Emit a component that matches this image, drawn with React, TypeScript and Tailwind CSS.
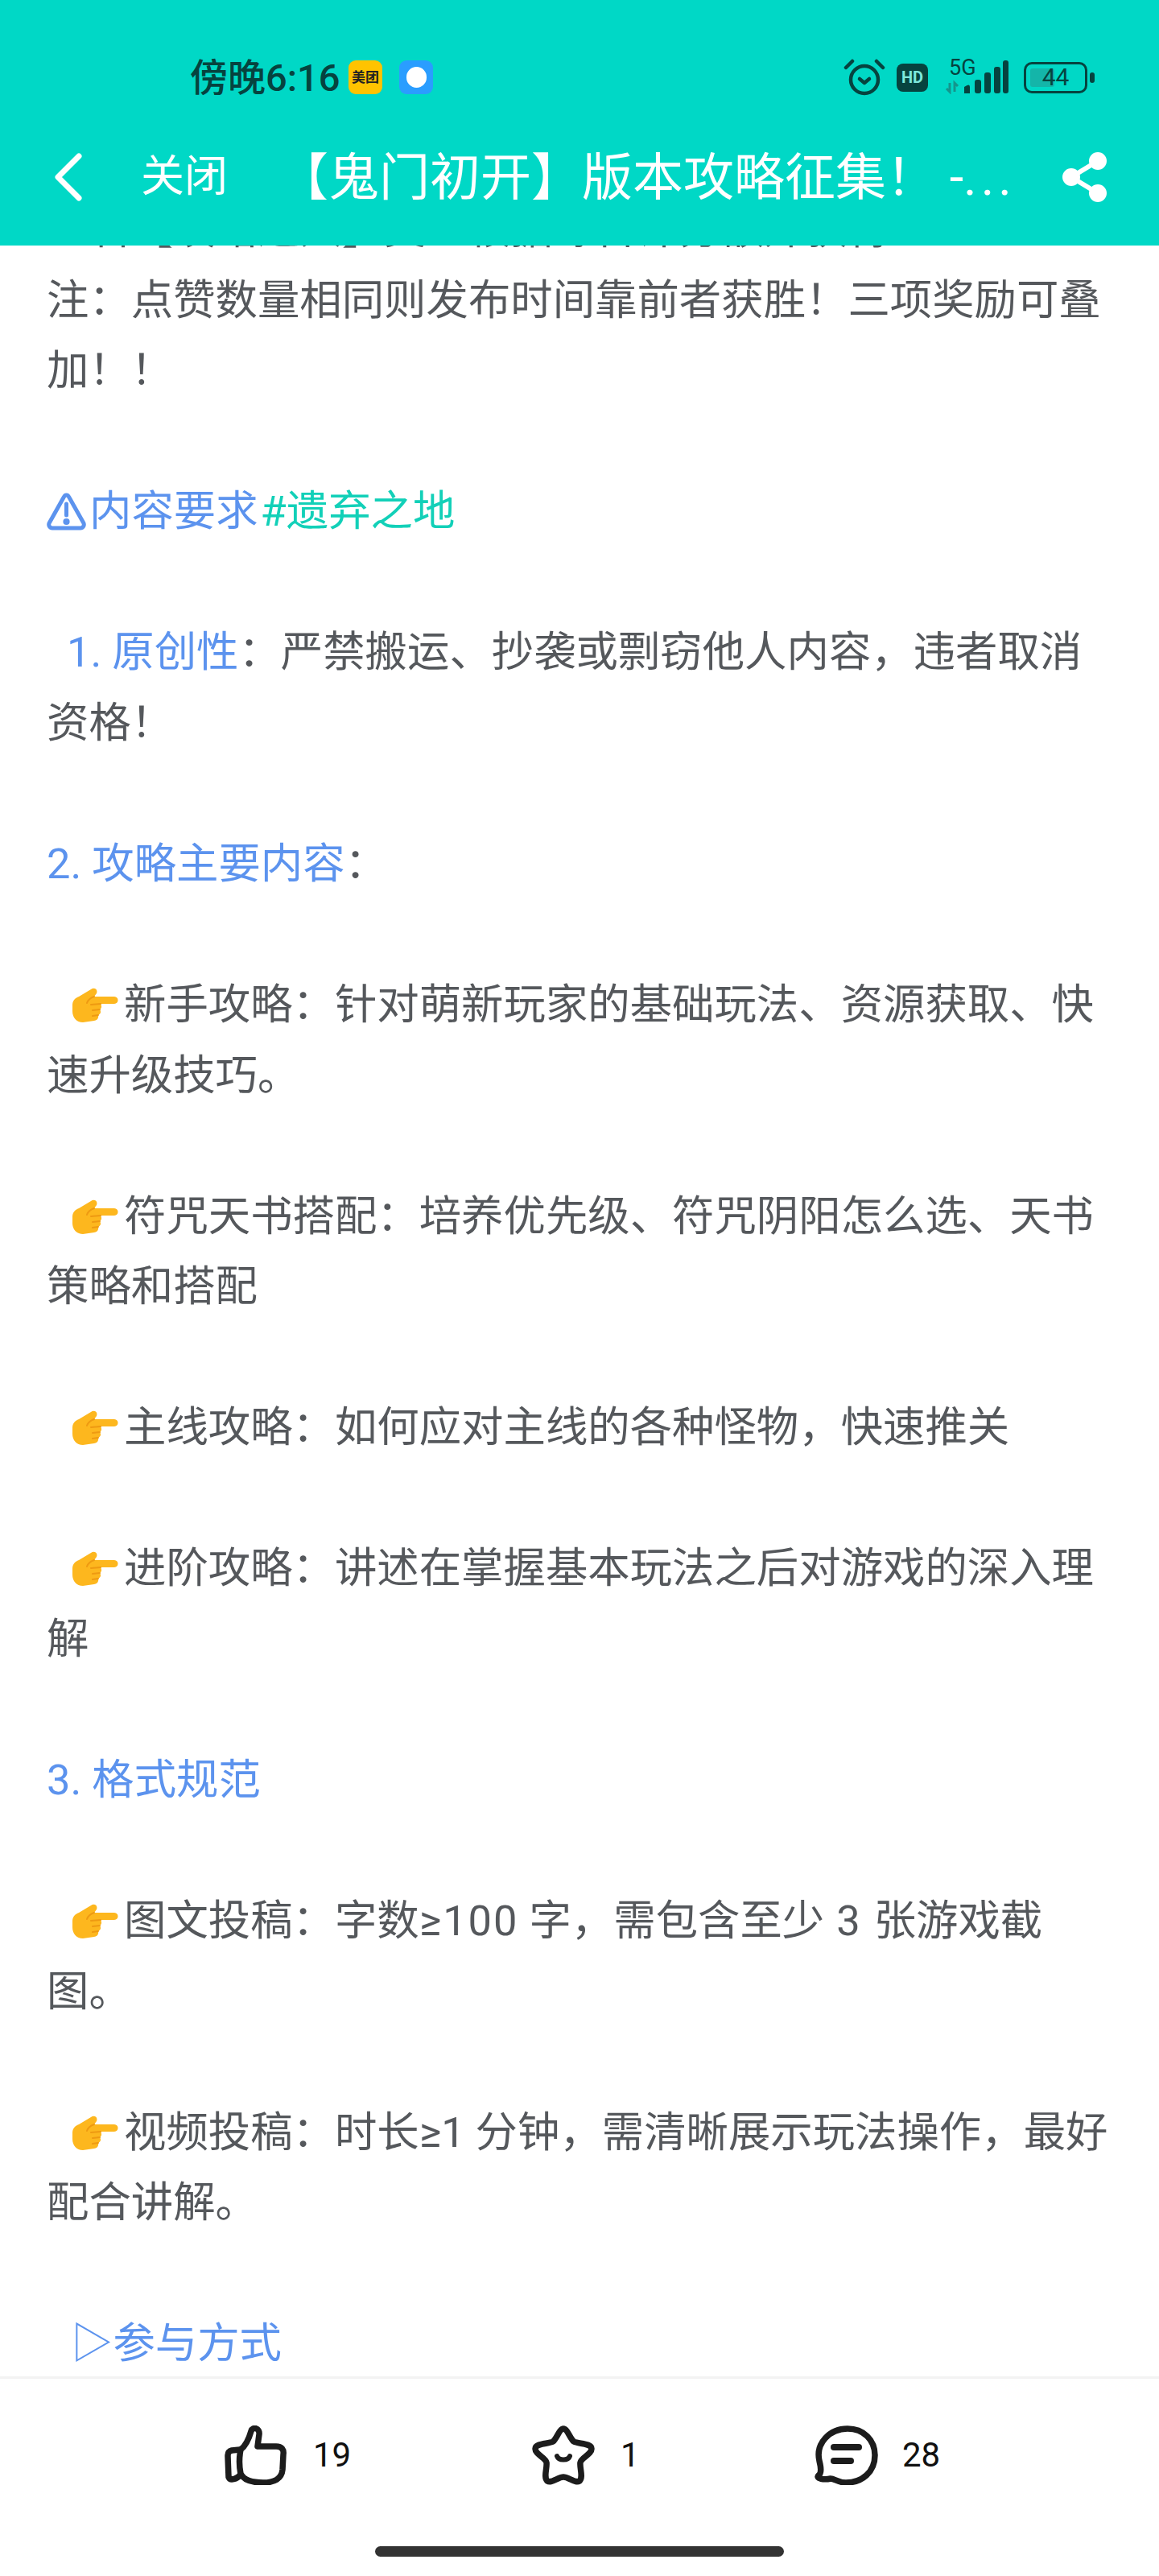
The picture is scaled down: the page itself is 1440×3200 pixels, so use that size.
const body = "text-[#55585c]";
const blue = "text-[#5c93ee]";
const dark = "#06433f";

function Hand() {
  return (
    <svg viewBox="0 0 58 45" className="mr-[7px] inline-block h-[45px] w-[58px] align-[-5px]">
      <path d="M1 23 C1 17 4 14 9 12 L24 3 C28 0 33 3 31 8 L28 12 L53 12 C59 12 59 21 53 21 L36 21 C38 24 37 27 35 28 C37 31 36 34 33 35 C34 39 31 42 28 42 L14 44 C6 44 1 38 1 30 Z" fill="#fdb71e" />
      <path d="M28 12 C22 14 20 17 19 20 M36 21 L24 22 M35 28 L26 29 M33 35 L26 36" fill="none" stroke="#ee9a12" strokeWidth="2" strokeLinecap="round" />
    </svg>
  );
}

function Warn() {
  return (
    <svg viewBox="0 0 49 47" className="mr-[4px] inline-block h-[47px] w-[49px] align-[-6px]" fill="none" stroke="#5c93ee" strokeWidth="5" strokeLinejoin="round" strokeLinecap="round">
      <path d="M24.5 3 C26 3 27 4 28 6 L46 38 C47 41 45 44 42 44 L7 44 C4 44 2 41 3 38 L21 6 C22 4 23 3 24.5 3 Z" />
      <path d="M24.5 14 L24.5 28" />
      <circle cx="24.5" cy="36" r="1.6" fill="#5c93ee" />
    </svg>
  );
}

function Line({ children, className = "" }: { children?: React.ReactNode; className?: string }) {
  return <p className={`min-h-[87.55px] ${className}`}>{children}</p>;
}

function Alarm() {
  return (
    <svg viewBox="0 0 52 46" className="h-[46px] w-[52px]" fill="none" stroke={dark} strokeWidth="4.5" strokeLinecap="round" strokeLinejoin="round">
      <circle cx="26" cy="26" r="17" />
      <path d="M20 25 L26 30 L32 25" />
      <path d="M3 11 L11 3 M49 11 L41 3" />
    </svg>
  );
}

function Signal() {
  return (
    <div className="relative h-[42px] w-[79px]">
      <span className="absolute left-[5px] top-[-6px] text-[27px] leading-[30px] text-[#06433f]">5G</span>
      <svg viewBox="0 0 79 42" className="h-[42px] w-[79px]">
        <path d="M6 28 L6 39 L2 35 M12 39 L12 28 L16 32" fill="none" stroke="#14958c" strokeWidth="3" />
        <path d="M24 41 L24 33 Q31 28 31 33 L31 41 Z" fill={dark} />
        <rect x="37" y="24" width="8" height="17" rx="3" fill={dark} />
        <rect x="49" y="15" width="8" height="26" rx="3" fill={dark} />
        <rect x="61" y="8" width="8" height="33" rx="3" fill={dark} />
        <rect x="72" y="0" width="7" height="41" rx="3" fill={dark} />
      </svg>
    </div>
  );
}

function Battery() {
  return (
    <div className="flex items-center gap-[3px]">
      <div className="relative flex h-[39px] w-[79px] items-center justify-center overflow-hidden rounded-[10px] border-[3px] border-[#06433f]">
        <span className="absolute inset-y-[5px] left-[5px] w-[30px] rounded-[3px] bg-[#14b5a9]" />
        <span className="relative text-[30px] leading-none text-[#06433f]">44</span>
      </div>
      <span className="h-[13px] w-[6px] rounded-full bg-[#06433f]" />
    </div>
  );
}

export default function App() {
  return (
    <div className="relative flex h-[3200px] w-[1440px] flex-col overflow-hidden bg-white font-['Roboto','Noto_Sans_CJK_SC',sans-serif]">
      <header className="relative z-10 h-[305px] shrink-0 bg-[#00d8c6]">
        <div className="flex h-[160px] items-center justify-between pl-[236px] pr-[80px] pt-[32px]">
          <div className="flex items-center">
            <span className="w-[184px] whitespace-nowrap text-[47px] font-medium leading-none text-[#06433f]">傍晚6:16</span>
            <span className="ml-[13px] flex h-[42px] w-[42px] items-center justify-center rounded-[9px] bg-[#ffc300] text-[17px] font-bold leading-none text-[#222]">美团</span>
            <span className="ml-[21px] flex h-[42px] w-[42px] items-center justify-center rounded-[9px] bg-[#2a9dff]">
              <span className="h-[26px] w-[25px] rounded-full bg-white" />
            </span>
          </div>
          <div className="flex items-center">
            <Alarm />
            <span className="ml-[14px] flex h-[35px] w-[39px] items-center justify-center rounded-[8px] bg-[#06433f] text-[20px] font-bold leading-none text-[#7de8dc]">HD</span>
            <div className="ml-[21px]">
              <Signal />
            </div>
            <div className="ml-[19px]">
              <Battery />
            </div>
          </div>
        </div>
        <div className="flex h-[120px] items-center pl-[66px] pr-[62px] text-white">
          <svg viewBox="0 0 40 60" className="h-[60px] w-[40px] shrink-0" fill="none" stroke="white" strokeWidth="7" strokeLinecap="round" strokeLinejoin="round">
            <path d="M32 4 L6 30 L32 56" />
          </svg>
          <span className="ml-[69px] shrink-0 text-[54px] leading-none">关闭</span>
          <span className="ml-[62px] whitespace-pre text-[63px] leading-none">【鬼门初开】版本攻略征集！ -<span className="tracking-[5px]">...</span></span>
          <svg viewBox="0 0 60 64" className="ml-auto h-[64px] w-[60px] shrink-0" fill="white" stroke="white" strokeWidth="6">
            <path d="M46 12 L13 32 L46 52" fill="none" />
            <circle cx="46" cy="12" r="8" />
            <circle cx="13" cy="32" r="8" />
            <circle cx="46" cy="52" r="8" />
          </svg>
        </div>
      </header>

      <main className={`min-h-0 flex-1 overflow-hidden px-[58px] text-[52.4px] leading-[87.55px] ${body}`}>
        <div className="mt-[-63px]">
          <Line>一名【攻略达人】奖：根据综合评分额外获得</Line>
          <Line>注：点赞数量相同则发布时间靠前者获胜！三项奖励可叠加！！</Line>
          <Line />
          <Line className={blue}><Warn />内容要求<span className="ml-[3px] text-[#12d0b8]">#遗弃之地</span></Line>
          <Line />
          <Line className="indent-[25px]"><span className={blue}>1. 原创性</span>：严禁搬运、抄袭或剽窃他人内容，违者取消资格！</Line>
          <Line />
          <Line><span className={blue}>2. 攻略主要内容</span>：</Line>
          <Line />
          <Line className="indent-[31px]"><Hand />新手攻略：针对萌新玩家的基础玩法、资源获取、快速升级技巧。</Line>
          <Line />
          <Line className="indent-[31px]"><Hand />符咒天书搭配：培养优先级、符咒阴阳怎么选、天书策略和搭配</Line>
          <Line />
          <Line className="indent-[31px]"><Hand />主线攻略：如何应对主线的各种怪物，快速推关</Line>
          <Line />
          <Line className="indent-[31px]"><Hand />进阶攻略：讲述在掌握基本玩法之后对游戏的深入理解</Line>
          <Line />
          <Line className={blue}>3. 格式规范</Line>
          <Line />
          <Line className="indent-[31px]"><Hand />图文投稿：字数<span className="tracking-[2px]">≥100</span> 字，需包含至少<span className="tracking-[2px]"> 3 </span>张游戏截图。</Line>
          <Line />
          <Line className="indent-[31px]"><Hand />视频投稿：时长≥1 分钟，需清晰展示玩法操作，最好配合讲解。</Line>
          <Line />
          <Line className={`indent-[30px] ${blue}`}>▷参与方式</Line>
        </div>
      </main>

      <footer className="h-[248px] shrink-0 border-t-[3px] border-[#f3f3f3] bg-white">
        <div className="flex h-[190px] items-center pl-[279px] text-[42px] leading-none text-[#111]">
          <div className="flex w-[382px] items-center gap-[32px]">
            <svg viewBox="0 0 78 74" className="h-[74px] w-[78px]" fill="none" stroke="#1c1c1c" strokeWidth="7.5" strokeLinejoin="round" strokeLinecap="round">
              <path d="M20 30 C28 24 31 14 33 7 C35 1 44 3 43 11 L41 26 L64 26 C71 26 74 30 73 36 L72 55 C71 66 62 71 48 71 C34 71 24 68 20 60 C18 50 18 40 20 30 Z" />
              <path d="M19 30 L9 31 C5 32 4 34 4 38 L5 64 C7 69 15 67 20 61" />
            </svg>
            <span>19</span>
          </div>
          <div className="flex w-[348px] items-center gap-[32px]">
            <svg viewBox="0 0 78 74" className="h-[74px] w-[78px]" fill="none" stroke="#1c1c1c" strokeWidth="7.5" strokeLinejoin="round" strokeLinecap="round">
              <path d="M39 4 C44 4 47 16 52 20 C58 23 74 22 74 29 C74 36 61 40 60 46 C59 53 64 64 59 69 C54 72 45 64 39 64 C33 64 24 72 19 69 C14 64 19 53 18 46 C17 40 4 36 4 29 C4 22 20 23 26 20 C31 16 34 4 39 4 Z" />
              <path d="M31 38 C33 44 45 44 47 38" strokeWidth="6" />
            </svg>
            <span>1</span>
          </div>
          <div className="flex items-center gap-[30px]">
            <svg viewBox="0 0 82 74" className="h-[74px] w-[82px]" fill="none" stroke="#1c1c1c" strokeWidth="7.5" strokeLinejoin="round" strokeLinecap="round">
              <path d="M44 4 C64 4 78 18 78 37 C78 58 62 71 42 71 C32 71 28 66 23 66 C15 68 4 66 8 62 C12 59 11 52 9 44 C4 22 22 4 44 4 Z" />
              <path d="M27 27 L58 27" strokeWidth="8" />
              <path d="M27 44 L48 44" strokeWidth="8" />
            </svg>
            <span>28</span>
          </div>
        </div>
        <div className="mx-auto mt-[18px] h-[13px] w-[508px] rounded-full bg-[#333333]" />
      </footer>
    </div>
  );
}
